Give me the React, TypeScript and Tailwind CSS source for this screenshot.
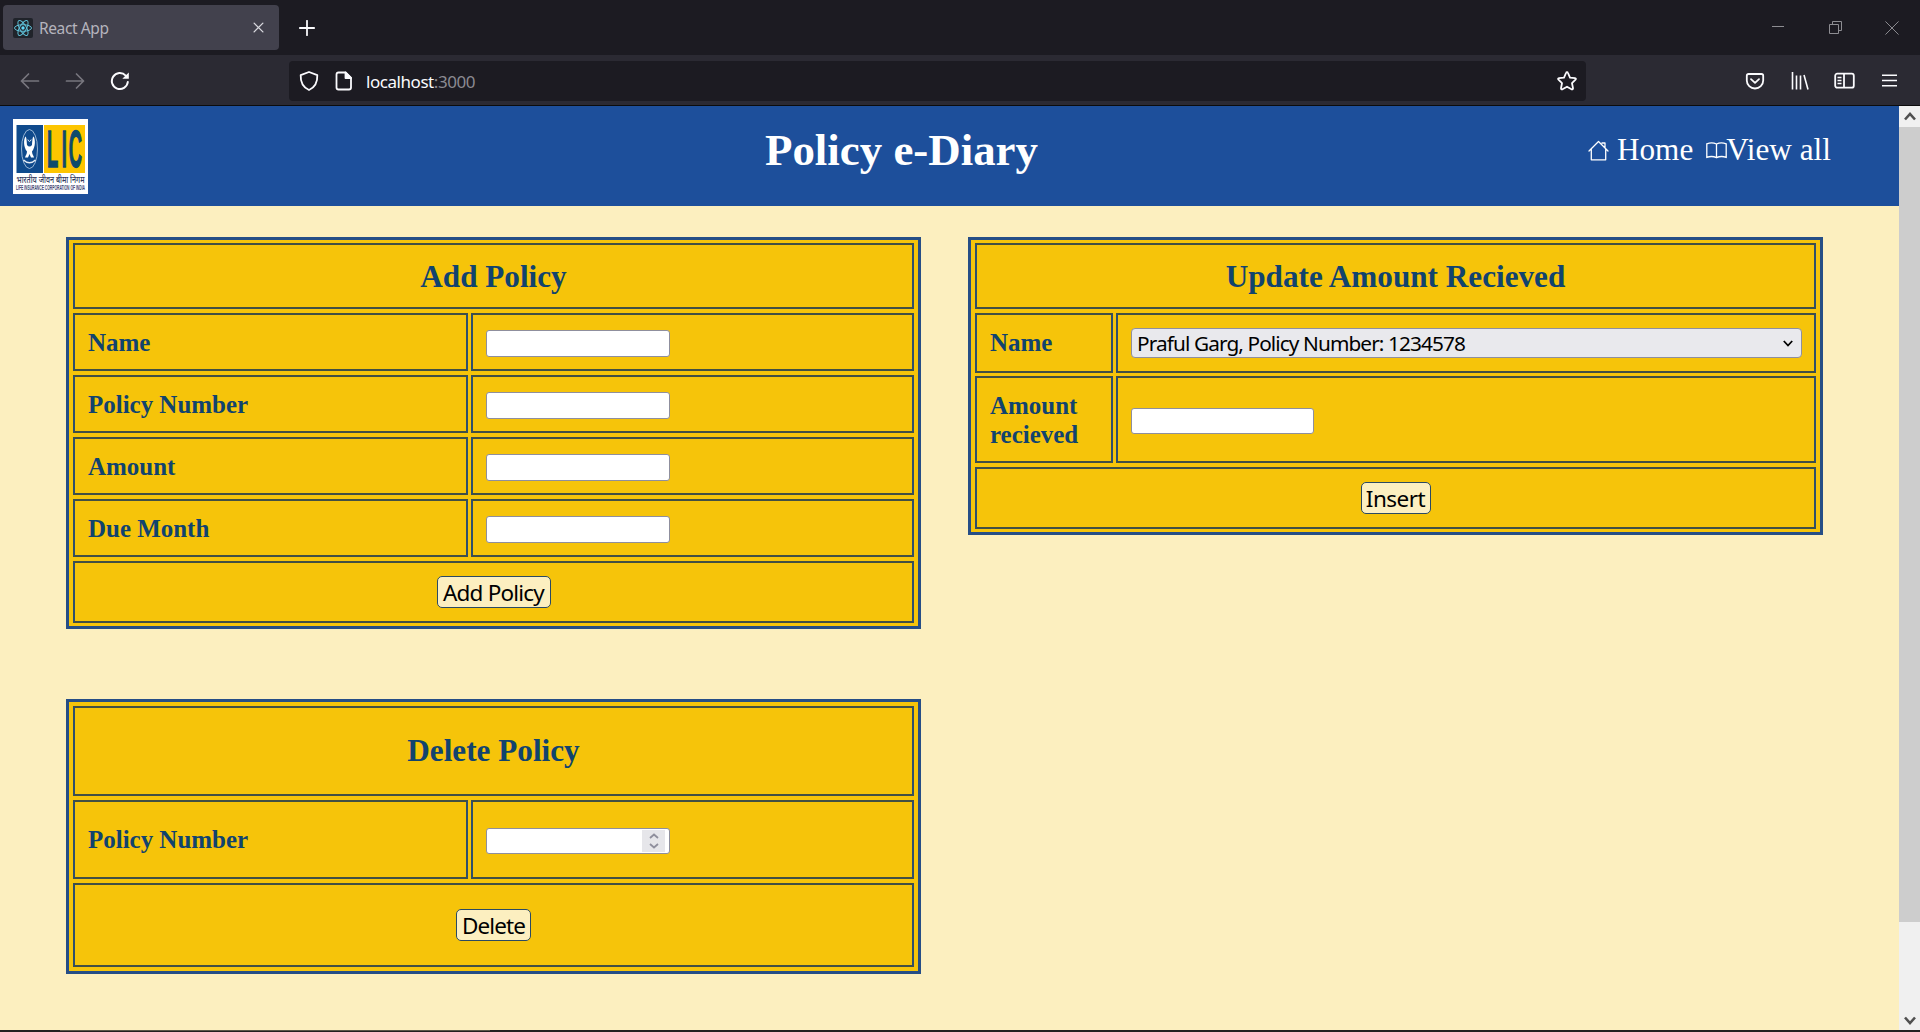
import type { ReactNode } from "react";

function LicLogo() {
  return (
    <svg className="size-[75px] shrink-0 overflow-visible" viewBox="0 0 75 75">
      <rect width="75" height="75" fill="#fff" />
      <rect x="3.5" y="6" width="26.5" height="48" fill="#0f4a8c" />
      <rect x="31" y="6" width="41" height="48" fill="#fdc500" />
      <ellipse cx="16.5" cy="30" rx="8" ry="19.5" fill="none" stroke="#b9cfe6" strokeWidth="0.8" />
      <path d="M12.500 17.500 C10.500 20 10.300 28 14 32.500 C14 35 12.500 36.500 12 38.500 H15 L16.500 35 L18 38.500 H21 C20.500 36.500 19 35 19 32.500 C22.700 28 22.500 20 20.500 17.500 C19.500 18 19.300 22 19 26 Q16.500 29 14 26 C13.700 22 13.500 18 12.500 17.500Z" fill="#fff" />
      <path d="M14.800 20.500 Q16.500 24.500 18.200 20.500" fill="none" stroke="#dbe6f2" strokeWidth="1" />
      <path d="M10.500 41 Q16.500 46.500 22.500 41" fill="none" stroke="#e7eef6" strokeWidth="1.600" />
      <text transform="scale(0.36 1)" x="94.4 135.1 155" y="48" fontSize="51" fontWeight="700" fill="#0f4a6c" stroke="#0f4a6c" strokeWidth="1.400" fontFamily="'Liberation Sans', sans-serif">LIC</text>
      <text x="3.500" y="63.500" fontSize="8.800" fontWeight="500" fill="#333a5c" textLength="68" lengthAdjust="spacingAndGlyphs" fontFamily="'Noto Sans', sans-serif">भारतीय जीवन बीमा निगम</text>
      <text x="3" y="71" fontSize="7.200" fontWeight="600" fill="#3b4470" textLength="69" lengthAdjust="spacingAndGlyphs" fontFamily="'Liberation Sans', sans-serif">LIFE INSURANCE CORPORATION OF INDIA</text>
    </svg>
  );
}

function ReactIcon() {
  return (
    <svg className="size-5 shrink-0" viewBox="0 0 20 20">
      <rect width="20" height="20" rx="2" fill="#20232a" />
      <g fill="none" stroke="#5fc0d8" strokeWidth="1">
        <ellipse cx="10" cy="10" rx="8.500" ry="3.300" />
        <ellipse cx="10" cy="10" rx="8.500" ry="3.300" transform="rotate(60 10 10)" />
        <ellipse cx="10" cy="10" rx="8.500" ry="3.300" transform="rotate(120 10 10)" />
      </g>
      <circle cx="10" cy="10" r="1.700" fill="#61dafb" />
    </svg>
  );
}

function Glyph({ d, className, w = 2 }: { d: string; className: string; w?: number }) {
  return (
    <svg className={className} viewBox="0 0 20 20" fill="none" stroke="currentColor" strokeWidth={w} strokeLinecap="round" strokeLinejoin="round">
      <path d={d} />
    </svg>
  );
}

function TabStrip() {
  return (
    <div className="flex h-[55px] items-center bg-[#1c1b22] pb-0">
      <div className="ml-[3px] flex h-[45px] w-[276px] items-center rounded bg-[#42414d] pl-[10px] pr-[15px]">
        <ReactIcon />
        <span className="ml-[6px] pt-[2px] text-[15.500px] tracking-[-0.400px] text-[#b5b4bd]">React App</span>
        <Glyph className="ml-auto size-[11px] text-[#d8d8de]" w={2.4} d="M2 2 L18 18 M18 2 L2 18" />
      </div>
      <Glyph className="ml-5 size-4 text-[#fbfbfe]" w={2.2} d="M10 1 V19 M1 10 H19" />
      <div className="ml-auto flex items-center pr-[21px] text-[#8d8d92]">
        <div className="mb-[2px] h-px w-3 bg-current" />
        <svg className="ml-[45px] size-[13px]" viewBox="0 0 13 13" fill="none" stroke="currentColor">
          <path d="M.5 3.500 H9.500 V12.500 H.5Z M3.500 3.500 V.5 H12.500 V9.500 H9.500" />
        </svg>
        <Glyph className="ml-[43px] size-[14px]" w={1.4} d="M1 1 L19 19 M19 1 L1 19" />
      </div>
    </div>
  );
}

function NavBar() {
  return (
    <div className="flex h-[51px] items-center border-b border-[#0c0c0d] bg-[#2b2a33] pt-px text-[#fbfbfe]">
      <Glyph className="ml-5 size-5 text-[#77767e]" w={1.7} d="M18.500 10 H1.500 M8.500 3 L1.500 10 L8.500 17" />
      <Glyph className="ml-[25px] size-5 text-[#77767e]" w={1.7} d="M1.500 10 H18.500 M11.500 3 L18.500 10 L11.500 17" />
      <svg className="ml-[25px] size-5" viewBox="0 0 20 20" fill="none">
        <path d="M17.800 11 A8 8 0 1 1 15.700 4.600" stroke="currentColor" strokeWidth="2" strokeLinecap="round" />
        <path d="M18.800 1.500 V7.800 H12.300Z" fill="currentColor" />
      </svg>
      <div className="ml-[159px] flex h-10 w-[1297px] items-center rounded bg-[#1c1b22] pl-[10px] pr-[9px]">
        <svg className="size-[20px]" viewBox="0 0 20 20" fill="none" stroke="currentColor" strokeWidth="1.800" strokeLinejoin="round">
          <path d="M10 1 L18.300 4.200 C18.600 11 16.500 16 10 19 C3.500 16 1.400 11 1.700 4.200Z" />
        </svg>
        <svg className="ml-[15px] size-[20px]" viewBox="0 0 20 20" fill="none" stroke="currentColor" strokeWidth="1.800" strokeLinejoin="round">
          <path d="M4.500 1.500 H11.500 L17 7 V16.500 Q17 18.500 15 18.500 H4.500 Q2.500 18.500 2.500 16.500 V3.500 Q2.500 1.500 4.500 1.500Z" />
          <path d="M11.500 1.500 V7 H17Z" fill="currentColor" />
        </svg>
        <div className="ml-3 pt-[2px] text-[17px] tracking-[-0.450px]">
          localhost<span className="text-[#8b8a91]">:3000</span>
        </div>
        <Glyph className="ml-auto size-[20px]" w={1.800} d="M10 1.200 Q10.700 1.200 11 2 L13 6.700 L18 7.200 Q19.600 7.500 18.500 8.700 L15 12.200 L16 17.200 Q16 18.900 14.500 18.300 L10 15.700 L5.500 18.300 Q4 18.900 4 17.200 L5 12.200 L1.500 8.700 Q.4 7.500 2 7.200 L7 6.700 L9 2 Q9.300 1.200 10 1.200Z" />
      </div>
      <svg className="ml-[159px] h-[18px] w-5" viewBox="0 0 20 18" fill="none" stroke="currentColor" strokeWidth="1.800" strokeLinecap="round" strokeLinejoin="round">
        <path d="M3.500 2 H16.500 Q18.200 2 18.200 3.700 V8.500 A8.200 8 0 0 1 1.800 8.500 V3.700 Q1.800 2 3.500 2Z" />
        <path d="M6 7.200 L10 10.900 L14 7.200" />
      </svg>
      <svg className="ml-[26px] h-[19px] w-[18px]" viewBox="0 0 18 19" fill="none" stroke="currentColor" strokeWidth="1.600">
        <path d="M1.500 1 V18.500 M5.500 4.500 V18.500 M9.500 4.500 V18.500 M13 4 L17 18.500" />
      </svg>
      <svg className="ml-[25px] h-[17px] w-[21px]" viewBox="0 0 21 17" fill="none" stroke="currentColor" strokeWidth="1.800">
        <rect x="1.200" y="1.700" width="18.600" height="14" rx="2" />
        <path d="M10 2 V15.500" />
        <path d="M3.500 5.500 H7.500 M3.500 8.500 H7.500 M3.500 11.500 H7.500" strokeWidth="1.300" />
      </svg>
      <Glyph className="ml-[27px] size-[15px]" w={2.200} d="M0 3 H20 M0 10 H20 M0 17 H20" />
    </div>
  );
}

function SiteHeader() {
  return (
    <header className="flex h-[100px] items-start bg-[#1d4f9b] pt-[13px] pl-[13px] font-['Liberation_Serif',serif] text-white">
      <LicLogo />
      <h1 className="ml-[677px] mt-[6px] w-[274px] text-[44.900px] leading-[50px] font-bold whitespace-nowrap">Policy e-Diary</h1>
      <nav className="ml-[549px] mt-[13px] flex items-center text-[31.2px] leading-9 whitespace-nowrap">
        <svg className="size-[21px]" viewBox="0 0 21 21" fill="none" stroke="currentColor" strokeWidth="1.300" strokeLinecap="round" strokeLinejoin="round">
          <path d="M1 11 L10.500 1.500 L20 11 M3.300 9 V19.800 H17.700 V9 M14 3 H17 V7.800" />
        </svg>
        <span className="ml-2">Home</span>
        <svg className="ml-[13px] h-[17px] w-[21px]" viewBox="0 0 21 17" fill="none" stroke="currentColor" strokeWidth="1.300">
          <path d="M10.500 2 Q6 -.2 .8 1.800 V15.300 Q6 13.500 10.500 15.700 Q15 13.500 20.200 15.300 V1.800 Q15 -.2 10.500 2 V15.700" />
        </svg>
        <span className="-ml-px">View all</span>
      </nav>
    </header>
  );
}

function Cell({ className, children }: { className: string; children?: ReactNode }) {
  return <div className={`flex items-center border-2 border-x-[#2f4f6c] border-y-[#414f44] ${className}`}>{children}</div>;
}

function Heading({ children, className }: { children: ReactNode; className: string }) {
  return (
    <Cell className={`justify-center ${className}`}>
      <h2 className="text-[31.2px] leading-9 font-bold">{children}</h2>
    </Cell>
  );
}

function Action({ children, className }: { children: ReactNode; className: string }) {
  return (
    <button className={`h-8 rounded-[5px] border border-[#2b4a63] bg-[#fcefc0] text-center font-['Noto_Sans',sans-serif] text-[22.500px] leading-[29px] font-normal whitespace-nowrap text-black ${className}`}>
      {children}
    </button>
  );
}

function FieldRow({ label, className, children }: { label: string; className: string; children: ReactNode }) {
  return (
    <div className={`flex gap-[3px] ${className}`}>
      <Cell className="w-[395px] pl-[13px]">{label}</Cell>
      <Cell className="flex-1 pl-[13px]">{children}</Cell>
    </div>
  );
}

const inputBox = "rounded-[3px] border border-[#8f8f9d] bg-white";
const panel =
  "flex w-[855px] flex-col border-[3px] border-[#264e86] bg-[#f6c40a] px-1 font-['Liberation_Serif',serif] text-[24.960px] leading-[29px] font-bold text-[#11436e]";

function AddPolicy() {
  return (
    <section className={`${panel} h-[392px] gap-1 pt-[3px]`}>
      <Heading className="h-[66px] pt-[2px]">Add Policy</Heading>
      {["Name", "Policy Number", "Amount", "Due Month"].map((label) => (
        <FieldRow key={label} label={label} className="h-[58px]">
          <input className={`mt-[3px] h-[27px] w-[184px] ${inputBox}`} />
        </FieldRow>
      ))}
      <Cell className="h-[62px] justify-center">
        <Action className="w-[114px] tracking-[-0.800px]">Add Policy</Action>
      </Cell>
    </section>
  );
}

function DeletePolicy() {
  return (
    <section className={`${panel} mt-[70px] h-[275px] gap-1 pt-1`}>
      <Heading className="h-[90px]">Delete Policy</Heading>
      <FieldRow label="Policy Number" className="h-[79px]">
        <div className={`mt-[3px] flex h-[26px] w-[184px] items-center justify-end pr-1 ${inputBox}`}>
          <div className="flex h-[22px] w-[23px] items-center justify-center bg-[#e6e6ea] text-[#8f8f9d]">
            <svg className="h-4 w-[10px]" viewBox="0 0 10 16" fill="none" stroke="currentColor" strokeWidth="1.800">
              <path d="M1 5 L5 1.500 L9 5 M1 11 L5 14.500 L9 11" />
            </svg>
          </div>
        </div>
      </FieldRow>
      <Cell className="h-[84px] justify-center">
        <Action className="w-[75px] tracking-[-0.900px]">Delete</Action>
      </Cell>
    </section>
  );
}

function UpdateAmount() {
  return (
    <section className={`${panel} h-[298px] pt-[3px]`}>
      <Heading className="h-[66px] pt-[2px]">Update Amount Recieved</Heading>
      <div className="mt-1 flex h-[60px] gap-[3px]">
        <Cell className="w-[138px] pb-[2px] pl-[13px]">Name</Cell>
        <Cell className="flex-1 pl-[13px]">
          <div className="flex h-[30px] w-[671px] items-center justify-between rounded border border-[#8f8f9d] bg-[#e9e9ed] pl-[5px] pr-2 font-['Noto_Sans',sans-serif] text-[20.800px] font-normal text-black">
            <span className="tracking-[-0.900px]">Praful Garg, Policy Number: 1234578</span>
            <svg className="h-[7px] w-[10px]" viewBox="0 0 10 7" fill="none" stroke="currentColor" strokeWidth="1.800">
              <path d="M.8 1 L5 5.500 L9.200 1" />
            </svg>
          </div>
        </Cell>
      </div>
      <div className="mt-[3px] flex h-[87px] gap-[3px]">
        <Cell className="w-[138px] pl-[13px]">
          <span>
            Amount
            <br />
            recieved
          </span>
        </Cell>
        <Cell className="flex-1 pl-[13px]">
          <input className={`mt-[3px] h-[26px] w-[183px] ${inputBox}`} />
        </Cell>
      </div>
      <Cell className="mt-1 h-[62px] justify-center">
        <Action className="w-[70px] tracking-[-0.500px]">Insert</Action>
      </Cell>
    </section>
  );
}

function ScrollBar() {
  return (
    <div className="flex w-[21px] flex-col items-center bg-[#f0f0f0] text-[#505050]">
      <div className="flex h-[21px] items-center">
        <svg className="h-[9px] w-3" viewBox="0 0 12 9" fill="none" stroke="currentColor" strokeWidth="2.600">
          <path d="M1 7.500 L6 2 L11 7.500" />
        </svg>
      </div>
      <div className="h-[795px] w-full bg-[#cdcdcd]" />
      <svg className="mt-auto mb-[5px] h-[9px] w-3" viewBox="0 0 12 9" fill="none" stroke="currentColor" strokeWidth="2.600">
        <path d="M1 1.500 L6 7 L11 1.500" />
      </svg>
    </div>
  );
}

export default function App() {
  return (
    <div className="flex h-[1032px] w-[1920px] flex-col overflow-hidden font-['Noto_Sans',sans-serif]">
      <TabStrip />
      <NavBar />
      <div className="flex h-[924px] bg-[#fcefbf]">
        <div className="flex-1">
          <SiteHeader />
          <main className="flex items-start gap-[47px] pt-[31px] pl-[66px]">
            <div>
              <AddPolicy />
              <DeletePolicy />
            </div>
            <UpdateAmount />
          </main>
        </div>
        <ScrollBar />
      </div>
      <div className="h-[2px] bg-[#231f20] pl-[60px]">
        <div className="h-px w-[430px] bg-[#5a5648]" />
      </div>
    </div>
  );
}
